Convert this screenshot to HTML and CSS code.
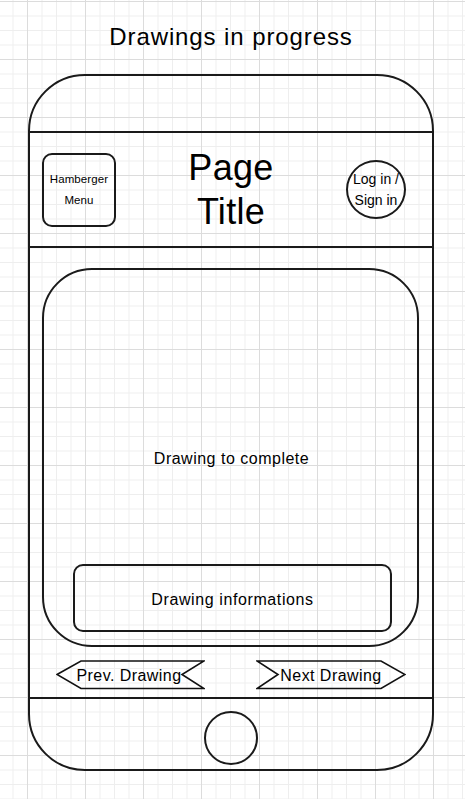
FILE: index.html
```html
<!DOCTYPE html>
<html lang="en">
<head>
<meta charset="utf-8">
<title>Drawings in progress</title>
<link rel="stylesheet" href="styles.css">
</head>
<body>
  <div class="page-heading">Drawings in progress</div>
  <div class="phone">
    <div class="bezel-top"></div>
    <header class="app-header">
      <div class="menu-btn"><span>Hamberger</span><span>Menu</span></div>
      <h1 class="page-title">Page<br>Title</h1>
      <div class="login-btn"><span>Log in /</span><span>Sign in</span></div>
    </header>
    <main class="content">
      <section class="drawing">
        <div class="drawing-label">Drawing to complete</div>
        <div class="drawing-info">Drawing informations</div>
      </section>
      <nav class="pager">
        <div class="arrow arrow-prev">
          <svg class="arrow-shape" width="149" height="30" viewBox="0 0 149 30"><polygon points="1,14.5 25,1 148,1 126,14.5 148,28.5 25,28.5" /></svg>
          <span>Prev. Drawing</span>
        </div>
        <div class="arrow arrow-next">
          <svg class="arrow-shape" width="150" height="30" viewBox="0 0 150 30"><polygon points="1,1 125,1 149,14.5 125,28.5 1,28.5 22,14.5" /></svg>
          <span>Next Drawing</span>
        </div>
      </nav>
    </main>
    <footer class="bezel-bottom">
      <div class="home-btn"></div>
    </footer>
  </div>
</body>
</html>
```

FILE: styles.css
```css
html {
  background-color: #ffffff;
  background-image:
    linear-gradient(90deg, #dcdcdc 1px, transparent 1px),
    linear-gradient(180deg, #dcdcdc 1px, transparent 1px),
    linear-gradient(90deg, #eeeeee 1px, transparent 1px),
    linear-gradient(180deg, #eeeeee 1px, transparent 1px);
  background-size: 58px 58px, 58px 58px, 14.5px 14.5px, 14.5px 14.5px;
  background-position: 27px 1px, 27px 1px, 12.5px 1px, 12.5px 1px;
  min-height: 100%;
}

body {
  margin: 0;
  width: 465px;
  height: 799px;
  font-family: "Liberation Sans", Arial, sans-serif;
  color: #000;
}

.page-heading {
  width: 406px;
  margin-left: 28px;
  height: 74px;
  display: flex;
  align-items: center;
  justify-content: center;
  font-size: 24px;
  letter-spacing: 0.9px;
}

.phone {
  box-sizing: border-box;
  margin-left: 28px;
  width: 406px;
  height: 697px;
  border: 2px solid #1a1a1a;
  border-radius: 57px;
  display: flex;
  flex-direction: column;
}

.bezel-top {
  height: 55px;
  flex: none;
}

.app-header {
  box-sizing: border-box;
  height: 117px;
  flex: none;
  border-top: 2px solid #1a1a1a;
  border-bottom: 2px solid #1a1a1a;
  margin: 0 -2px;
  padding: 0 28px 0 14px;
  display: flex;
  align-items: center;
}

.menu-btn {
  box-sizing: border-box;
  width: 74px;
  height: 74px;
  border: 2px solid #1a1a1a;
  border-radius: 10px;
  display: flex;
  flex-direction: column;
  align-items: center;
  justify-content: center;
  font-size: 11.5px;
  line-height: 21px;
  letter-spacing: 0.1px;
  flex: none;
}

.page-title {
  flex: 1;
  margin: 0;
  text-align: center;
  font-weight: normal;
  font-size: 36px;
  line-height: 44px;
  letter-spacing: 0.3px;
}

.login-btn {
  box-sizing: border-box;
  width: 60px;
  height: 59px;
  border: 2px solid #1a1a1a;
  border-radius: 50%;
  display: flex;
  flex-direction: column;
  align-items: center;
  justify-content: center;
  font-size: 14px;
  line-height: 21px;
  white-space: nowrap;
  flex: none;
}

.content {
  height: 449px;
  flex: none;
  box-sizing: border-box;
  padding: 20px 13px 0 12px;
  display: flex;
  flex-direction: column;
}

.drawing {
  box-sizing: border-box;
  height: 379px;
  border: 2px solid #1a1a1a;
  border-radius: 50px;
  display: grid;
  grid-template: 1fr / 1fr;
}

.drawing-label,
.drawing-info {
  grid-area: 1 / 1;
}

.drawing-label {
  align-self: center;
  justify-self: center;
  font-size: 16px;
  letter-spacing: 0.5px;
  margin: 2px 0 0 2px;
}

.drawing-info {
  box-sizing: border-box;
  align-self: end;
  height: 68px;
  margin: 0 25px 13px 29px;
  border: 2px solid #1a1a1a;
  border-radius: 10px;
  display: flex;
  align-items: center;
  justify-content: center;
  padding-top: 3px;
  font-size: 16px;
  letter-spacing: 0.6px;
}

.pager {
  margin-top: 13px;
  padding-left: 14px;
  display: flex;
  gap: 51px;
}

.arrow {
  position: relative;
  width: 149px;
  height: 30px;
  display: flex;
  align-items: center;
  justify-content: center;
  font-size: 16px;
  letter-spacing: 0.45px;
  padding-top: 1px;
  box-sizing: border-box;
}

.arrow-next {
  width: 150px;
}

.arrow-shape {
  position: absolute;
  left: 0;
  top: 0;
}

.arrow-shape polygon {
  fill: none;
  stroke: #111;
  stroke-width: 1.6;
}

.arrow span {
  position: relative;
}

.arrow-prev span {
  margin-left: -3px;
}

.bezel-bottom {
  flex: 1;
  border-top: 2px solid #1a1a1a;
  margin: 0 -2px;
  display: flex;
  justify-content: center;
  padding-top: 12px;
}

.home-btn {
  box-sizing: border-box;
  width: 54px;
  height: 54px;
  border: 2px solid #1a1a1a;
  border-radius: 50%;
}
```
